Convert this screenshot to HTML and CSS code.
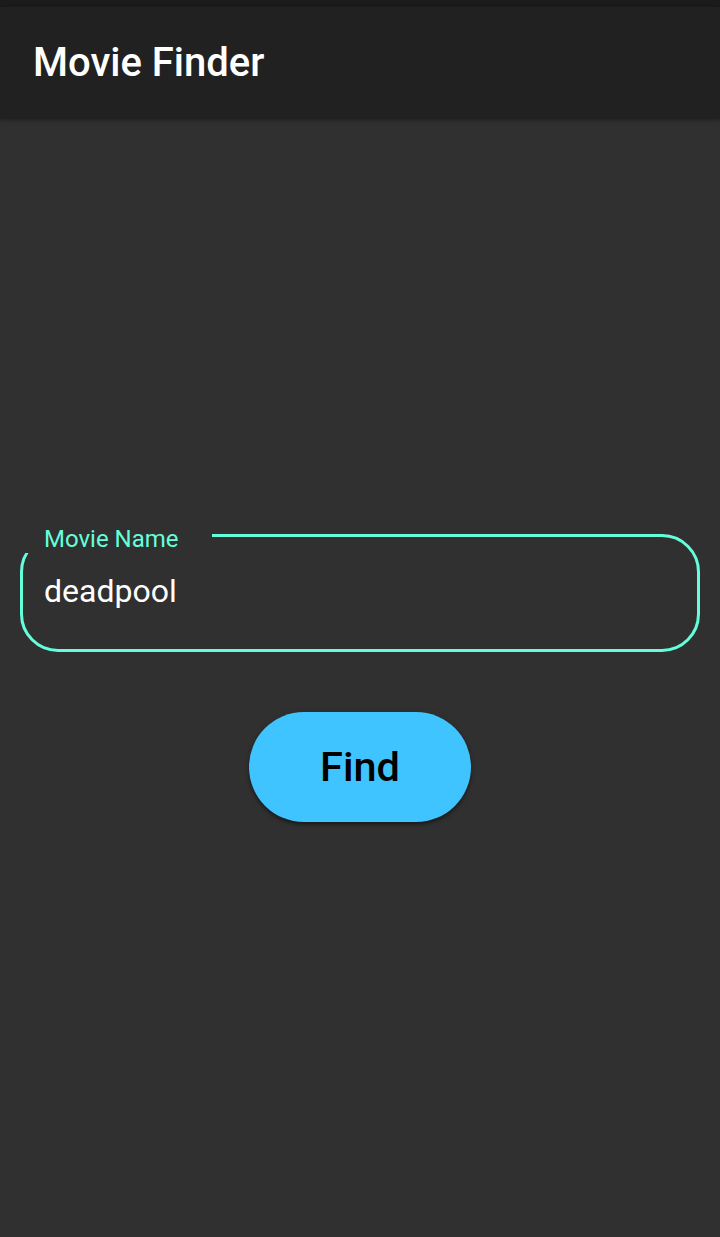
FILE: index.html
```html
<!DOCTYPE html>
<html>
<head>
<meta charset="utf-8">
<link rel="stylesheet" href="styles.css">
</head>
<body>
<div class="status"></div>
<header class="appbar"><h1 class="title">Movie Finder</h1></header>
<main class="content">
  <div class="form">
    <fieldset class="field">
      <legend class="label">Movie Name</legend>
      <div class="value">deadpool</div>
    </fieldset>
    <button class="find">Find</button>
  </div>
</main>
</body>
</html>
```
FILE: styles.css
```css
html, body {
  margin: 0;
  padding: 0;
  height: 100%;
}
body {
  background: #303030;
  font-family: Roboto, "Noto Sans", sans-serif;
  display: flex;
  flex-direction: column;
}
.status {
  height: 7px;
  background: #1b1b1b;
  flex: none;
}
.appbar {
  height: 112px;
  background: #212121;
  display: flex;
  align-items: center;
  padding: 0 33px;
  box-shadow: 0 2px 4px rgba(0,0,0,0.25);
  position: relative;
  z-index: 1;
  flex: none;
}
.title {
  margin: 0;
  color: #ffffff;
  font-size: 40px;
  font-weight: 500;
  line-height: 1;
}
.content {
  flex: 1;
  display: flex;
  flex-direction: column;
  justify-content: center;
  padding-bottom: 17px;
}
.form {
  display: flex;
  flex-direction: column;
  align-items: center;
  gap: 60px;
  padding: 0 20px;
}
.field {
  align-self: stretch;
  margin: 0;
  border: 3px solid #64ffda;
  border-radius: 38px;
  padding: 0;
  min-width: 0;
}
.label {
  color: #64ffda;
  font-size: 24px;
  line-height: 28px;
  padding: 7px 33px 0 21px;
  margin-left: 0;
}
.value {
  color: #ffffff;
  font-size: 32px;
  line-height: 38px;
  padding: 19px 20px 39px 21px;
}
.find {
  width: 222px;
  height: 110px;
  border: none;
  border-radius: 55px;
  background: #40c4ff;
  color: #000000;
  font-family: Roboto, "Noto Sans", sans-serif;
  font-size: 41.5px;
  font-weight: 500;
  box-shadow: 0 3px 3px rgba(0,0,0,0.3), 0 1px 6px rgba(0,0,0,0.2);
  padding: 0;
}
```
